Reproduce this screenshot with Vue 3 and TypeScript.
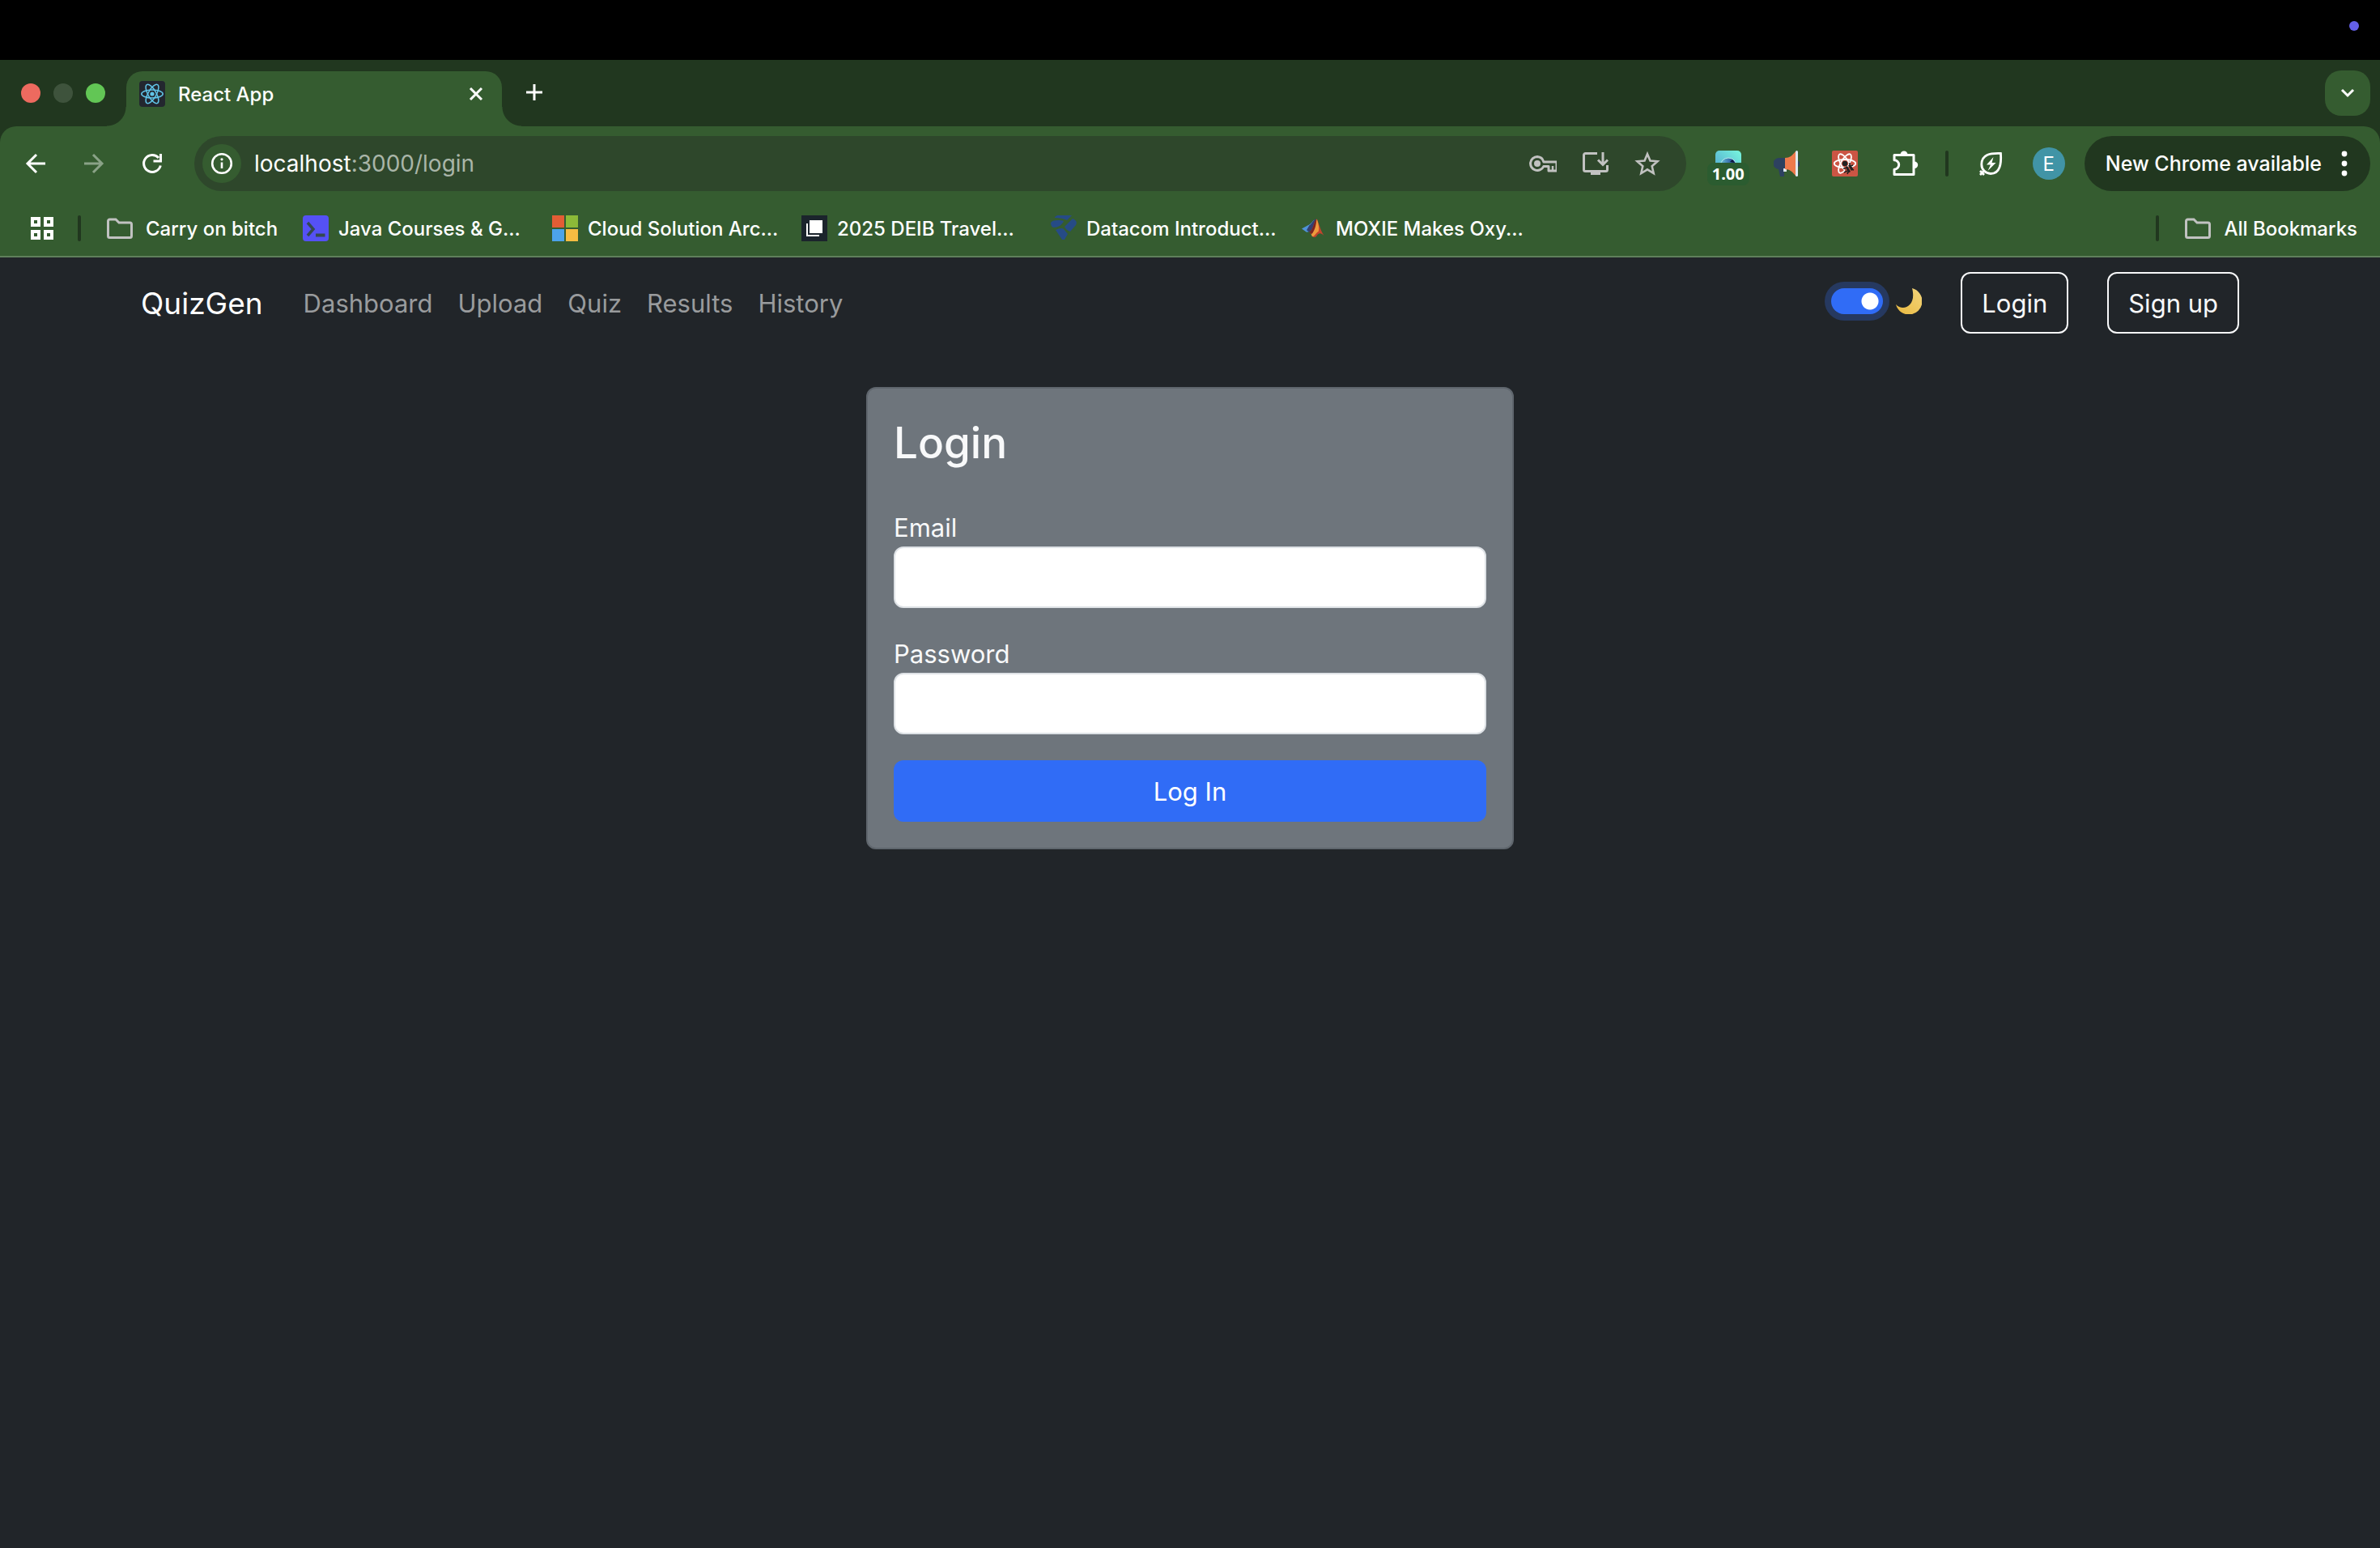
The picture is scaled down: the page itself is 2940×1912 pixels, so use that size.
<script setup lang="ts">
import { ref } from 'vue'

interface NavLink { label: string; href: string }
interface Bookmark { label: string; icon: 'java' | 'microsoft' | 'deib' | 'datacom' | 'matlab' }

const navLinks: NavLink[] = [
  { label: 'Dashboard', href: '#dashboard' },
  { label: 'Upload', href: '#upload' },
  { label: 'Quiz', href: '#quiz' },
  { label: 'Results', href: '#results' },
  { label: 'History', href: '#history' },
]

const bookmarks: Bookmark[] = [
  { label: 'Java Courses & G...', icon: 'java' },
  { label: 'Cloud Solution Arc...', icon: 'microsoft' },
  { label: '2025 DEIB Travel...', icon: 'deib' },
  { label: 'Datacom Introduct...', icon: 'datacom' },
  { label: 'MOXIE Makes Oxy...', icon: 'matlab' },
]

const darkMode = ref(true)
const email = ref('')
const password = ref('')
</script>

<template>
  <div class="screen">
    <div class="menubar"><span class="mic-dot"></span></div>

    <header class="browser">
      <div class="tabstrip">
        <div class="lights">
          <span class="light red"></span>
          <span class="light dim"></span>
          <span class="light green"></span>
        </div>
        <div class="tab">
          <svg class="i32" viewBox="0 0 32 32">
            <rect width="32" height="32" rx="4" fill="#23272f" />
            <g fill="none" stroke="#61c5e8" stroke-width="1.5">
              <ellipse cx="16" cy="16" rx="13.2" ry="5" />
              <ellipse cx="16" cy="16" rx="13.2" ry="5" transform="rotate(60 16 16)" />
              <ellipse cx="16" cy="16" rx="13.2" ry="5" transform="rotate(120 16 16)" />
            </g>
            <circle cx="16" cy="16" r="2.6" fill="#61c5e8" />
          </svg>
          <span class="tab-title">React App</span>
          <button class="plain" type="button" aria-label="Close tab">
            <svg class="i32" viewBox="0 0 32 32"><path d="M9 9l14 14M23 9L9 23" fill="none" stroke="#fff" stroke-width="3" /></svg>
          </button>
        </div>
        <button class="plain newtab" type="button" aria-label="New tab">
          <svg class="i32" viewBox="0 0 32 32"><path d="M16 5v20M6 15h20" fill="none" stroke="#fff" stroke-width="3" /></svg>
        </button>
        <button class="plain tabsearch" type="button" aria-label="Search tabs">
          <svg class="i32" viewBox="0 0 32 32"><path d="M9 12l7 7 7-7" fill="none" stroke="#fff" stroke-width="3" /></svg>
        </button>
      </div>

      <div class="toolbar">
        <div class="history">
          <button class="plain" type="button" aria-label="Back">
            <svg class="i32" viewBox="0 0 32 32"><path d="M28 16H6M17 5L6 16l11 11" fill="none" stroke="#fff" stroke-width="3" /></svg>
          </button>
          <button class="plain" type="button" aria-label="Forward">
            <svg class="i32" viewBox="0 0 32 32"><path d="M4 16h22M15 5l11 11-11 11" fill="none" stroke="#8aa287" stroke-width="3" /></svg>
          </button>
          <button class="plain" type="button" aria-label="Reload">
            <svg class="i32" viewBox="0 0 32 32">
              <path d="M26.300 18.500A10.500 10.500 0 1 1 24 9" fill="none" stroke="#fff" stroke-width="3" />
              <path d="M28 4v10.500H17.500v-3H25V4z" fill="#fff" />
            </svg>
          </button>
        </div>

        <div class="omnibox">
          <button class="plain info" type="button" aria-label="Site information">
            <svg class="i32" viewBox="0 0 32 32">
              <circle cx="16" cy="16" r="11.800" fill="none" stroke="#fff" stroke-width="2.600" />
              <path d="M16 14.500v7.500" stroke="#fff" stroke-width="2.600" />
              <circle cx="16" cy="10.800" r="1.600" fill="#fff" />
            </svg>
          </button>
          <div class="url"><span class="host">localhost</span>:3000/login</div>
          <div class="omni-icons">
            <svg class="i36" viewBox="0 0 36 36">
              <path d="M12 9.500a8.500 8.500 0 1 0 7.800 12H26v5.500h10V16H19.800A8.500 8.500 0 0 0 12 9.500z" fill="none" stroke="#c1c2c1" stroke-width="3" stroke-linejoin="round" />
              <circle cx="12" cy="18" r="4" fill="#c1c2c1" />
              <path d="M31 21v5" stroke="#c1c2c1" stroke-width="2.500" />
            </svg>
            <svg class="i32" viewBox="0 0 32 32">
              <path d="M18 3.500H3.500a2 2 0 0 0-2 2v18a2 2 0 0 0 2 2h25a2 2 0 0 0 2-2V18" fill="none" stroke="#c1c2c1" stroke-width="3" />
              <rect x="10" y="26" width="12" height="4" fill="#c1c2c1" />
              <path d="M25 2v15M19 11.500l6 6 6-6" fill="none" stroke="#c1c2c1" stroke-width="3" />
            </svg>
            <svg class="i32" viewBox="0 0 32 32">
              <path d="M16 4.200l3.500 8.300 9 .8-6.800 5.900 2 8.800-7.700-4.700L8.300 28l2-8.800-6.800-5.900 9-.8z" fill="none" stroke="#c1c2c1" stroke-width="2.600" />
            </svg>
          </div>
        </div>

        <div class="extensions">
          <div class="speed">
            <svg class="i32" viewBox="0 0 32 32">
              <defs>
                <linearGradient id="sky" x1="0" y1="1" x2="1" y2="0"><stop offset="0" stop-color="#4f9fcf" /><stop offset="1" stop-color="#78f7dd" /></linearGradient>
                <linearGradient id="lens" x1="0" y1="0" x2="1" y2="0"><stop offset="0" stop-color="#69c4dd" /><stop offset="1" stop-color="#142f86" /></linearGradient>
              </defs>
              <rect width="32" height="32" rx="5" fill="url(#sky)" />
              <circle cx="16" cy="19" r="10" fill="url(#lens)" stroke="#b7e9ea" stroke-width="1" />
              <path d="M18 14l3-3 3 4z" fill="#10183c" />
            </svg>
            <span class="speed-badge">1.00</span>
          </div>
          <svg class="i32" viewBox="0 0 32 32">
            <path d="M28 13h2a2 2 0 0 1 2 2v3a2 2 0 0 1-2 2h-2z" fill="#2d4160" />
            <path d="M15 9H7a7 7 0 0 0-1 14l2 9h5V23h2z" fill="#2d4160" />
            <rect x="12" y="22" width="4" height="4" fill="#dfe7ef" />
            <path d="M14 9c6 0 9-3 13-8v30c-4-5-7-8-13-8z" fill="#ee7a4c" />
            <rect x="27" y="0" width="3" height="32" rx="1.500" fill="#dfe9f0" />
          </svg>
          <svg class="i32" viewBox="0 0 32 32">
            <rect width="32" height="32" rx="2" fill="#cb5544" />
            <g fill="none" stroke="#fff" stroke-width="1.800">
              <ellipse cx="16" cy="16" rx="13.200" ry="5" />
              <ellipse cx="16" cy="16" rx="13.200" ry="5" transform="rotate(60 16 16)" />
              <ellipse cx="16" cy="16" rx="13.200" ry="5" transform="rotate(120 16 16)" />
            </g>
            <path d="M15 20h10l1 9h-9z" fill="#cb5544" />
            <circle cx="16" cy="16" r="3.200" fill="#222" />
            <path d="M16.500 20.500l2.500-1.500 4 7-2.500 1.500zM20 18.500l2.500-1.500 4 6-2.500 2z" fill="#222" />
            <path d="M14 22h3M15 27l4-2M19 29l1-3M22 15v3M26 18l-3 1M27 24l-3-1" stroke="#222" stroke-width="1.600" />
          </svg>
          <svg class="puzzle i36" viewBox="0 0 36 36">
            <path d="M5 9.500h24v24H5v-6.300a5.500 5.500 0 0 0 0-11.400z" transform="translate(0 -2)" fill="none" stroke="#fff" stroke-width="3" stroke-linejoin="round" />
            <path d="M12.500 7a4.500 4.500 0 0 1 9 0zM30 15.500a4.200 4.200 0 0 1 0 8.400z" fill="#fff" />
          </svg>
        </div>
        <span class="divider"></span>
        <svg class="leaf i32" viewBox="0 0 32 32">
          <path d="M28.500 3.500c.8 12-.5 25-12.500 25A11.300 11.300 0 0 1 4.800 17C5 5 15 3 28.500 3.500zM8.500 24.500L3 30M3 25l5 5" fill="none" stroke="#fff" stroke-width="2.800" />
          <path d="M19.500 8L11 17.500h5L12.500 25 22.500 15h-5z" fill="#fff" />
        </svg>
        <button class="plain avatar" type="button">E</button>
        <button class="plain update" type="button">
          <span>New Chrome available</span>
          <svg class="dots" viewBox="0 0 8 32"><g fill="#fff"><circle cx="4" cy="4" r="3.400" /><circle cx="4" cy="16" r="3.400" /><circle cx="4" cy="28" r="3.400" /></g></svg>
        </button>
      </div>

      <nav class="bookmarks">
        <svg class="i32" viewBox="0 0 32 32">
          <g fill="none" stroke="#fff" stroke-width="4"><rect x="4" y="4" width="8" height="8" /><rect x="20" y="4" width="8" height="8" /><rect x="4" y="20" width="8" height="8" /><rect x="20" y="20" width="8" height="8" /></g>
        </svg>
        <span class="divider first"></span>
        <a class="bookmark folder" href="#folder">
          <svg class="i32" viewBox="0 0 32 32"><path d="M1.500 25V7a2 2 0 0 1 2-2h7.500l4 4h13.500a2 2 0 0 1 2 2v14.500a2 2 0 0 1-2 2h-25a2 2 0 0 1-2-2z" fill="none" stroke="#c1c2c1" stroke-width="3" /></svg>
          <span>Carry on bitch</span>
        </a>
        <a v-for="b in bookmarks" :key="b.label" class="bookmark" href="#bookmark">
          <svg v-if="b.icon === 'java'" class="i32" viewBox="0 0 32 32">
            <rect width="32" height="32" rx="4" fill="#5551f5" />
            <path d="M6 9l7 8-7 8" fill="none" stroke="#34494f" stroke-width="3.500" />
            <path d="M16 24.500h11.500" stroke="#34494f" stroke-width="4" />
          </svg>
          <svg v-else-if="b.icon === 'microsoft'" class="i32" viewBox="0 0 32 32">
            <rect width="15" height="15" fill="#e35d35" /><rect x="17" width="15" height="15" fill="#8cba38" />
            <rect y="17" width="15" height="15" fill="#4ca3ea" /><rect x="17" y="17" width="15" height="15" fill="#f6bc42" />
          </svg>
          <svg v-else-if="b.icon === 'deib'" class="i32" viewBox="0 0 32 32">
            <rect width="32" height="32" fill="#1b242c" /><rect x="10" y="6" width="16" height="16" fill="#fff" />
            <path d="M7 10v15h15" fill="none" stroke="#fff" stroke-width="2" />
          </svg>
          <svg v-else-if="b.icon === 'datacom'" class="i32" viewBox="0 0 32 32">
            <g fill="#264b86">
              <path d="M5 2L8 0h18l-6 6C16 4 11 3 5 3z" />
              <path d="M0 9C3 5 12 6 16 7c-2 5-7 8-13 8-2-1-3-3-3-6z" />
              <path d="M17 14L27 4c4 2 6 4 4 8l-7 8c-3-1-6-3-7-6z" />
              <path d="M6 18c4-2 8-3 10-1l5 6-4 7h-3z" />
            </g>
          </svg>
          <svg v-else class="i32" viewBox="0 0 32 32">
            <g transform="translate(2 1) scale(.86)">
              <path d="M0 18l9-5c4-1 6-5 9-8l-7 17-4 1z" fill="#4f93d8" />
              <path d="M11 13c3-1 6-9 10-9l-6 15-4 4-4-3z" fill="#33406f" />
              <path d="M21 4c3 2 5 15 11 24-5-5-8-4-11 1-2 2-5 1-6 0-1-3-2-5-4-6 5-3 6-13 10-19z" fill="#c4432d" />
              <path d="M22 4c1 5 4 12 2 18-3 1-6 8-9 7-1-2-2-5-3-6 6-2 8-12 10-19z" fill="#ee9a3d" />
              <path d="M21 4c0 8-2 17-7 22l-3-3c5-3 6-13 10-19z" fill="#7b2420" />
            </g>
          </svg>
          <span>{{ b.label }}</span>
        </a>
        <span class="divider last"></span>
        <a class="bookmark all" href="#all">
          <svg class="i32" viewBox="0 0 32 32"><path d="M1.500 25V7a2 2 0 0 1 2-2h7.500l4 4h13.500a2 2 0 0 1 2 2v14.500a2 2 0 0 1-2 2h-25a2 2 0 0 1-2-2z" fill="none" stroke="#c1c2c1" stroke-width="3" /></svg>
          <span>All Bookmarks</span>
        </a>
      </nav>
    </header>

    <nav class="navbar">
      <a class="brand" href="#home">QuizGen</a>
      <div class="navlinks">
        <a v-for="l in navLinks" :key="l.label" :href="l.href">{{ l.label }}</a>
      </div>
      <div class="theme">
        <input id="theme" v-model="darkMode" class="switch" type="checkbox" role="switch" />
        <label for="theme" aria-label="Dark mode">
          <svg class="i32 moon" viewBox="0 0 32 32">
            <defs><linearGradient id="moon" x1="0" y1="1" x2="1" y2="0"><stop offset="0" stop-color="#e9b93f" /><stop offset="1" stop-color="#f3d57c" /></linearGradient></defs>
            <path d="M20 0A16.500 16.500 0 1 1 0 20c8 9 26 3 20-20z" fill="url(#moon)" />
          </svg>
        </label>
      </div>
      <button class="outline" type="button">Login</button>
      <button class="outline" type="button">Sign up</button>
    </nav>

    <main>
      <form class="card" @submit.prevent>
        <h3>Login</h3>
        <div class="field">
          <label for="email">Email</label>
          <input id="email" v-model="email" type="email" />
        </div>
        <div class="field">
          <label for="password">Password</label>
          <input id="password" v-model="password" type="password" />
        </div>
        <button class="submit" type="submit">Log In</button>
      </form>
    </main>
  </div>
</template>

<style>
body {
  background: #212529;
}
</style>

<style scoped>
* {
  box-sizing: border-box;
}
.screen {
  min-height: 100vh;
  background: #212529;
  font-family: Inter, "Liberation Sans", sans-serif;
  color: #fff;
}
svg {
  display: block;
  flex: none;
}
a {
  color: inherit;
  text-decoration: none;
}
button,
input {
  font-family: inherit;
}
.i32 {
  width: 32px;
  height: 32px;
}
.i36 {
  width: 36px;
  height: 36px;
}
.plain {
  display: flex;
  align-items: center;
  justify-content: center;
  padding: 0;
  border: 0;
  background: none;
  color: #fff;
}
.menubar {
  display: flex;
  justify-content: flex-end;
  padding: 26px 26px 36px;
  height: 74px;
  background: #000;
}
.mic-dot {
  width: 12px;
  height: 12px;
  border-radius: 50%;
  background: #6460e8;
}

.browser {
  background: #21371f;
  font-size: 24px;
  font-weight: 500;
}
.tabstrip {
  display: flex;
  align-items: center;
  height: 82px;
  padding: 0 12px 0 26px;
}
.lights {
  display: flex;
  gap: 16px;
  margin-right: 26px;
}
.light {
  width: 24px;
  height: 24px;
  border-radius: 50%;
}
.red {
  background: #ed6a5f;
}
.dim {
  background: #3e533c;
}
.green {
  background: #62c655;
}
.tab {
  position: relative;
  display: flex;
  align-items: center;
  align-self: flex-end;
  width: 464px;
  height: 68px;
  padding: 0 16px 12px;
  border-radius: 20px 20px 0 0;
  background: #355c30;
}
.tab::before,
.tab::after {
  content: "";
  position: absolute;
  bottom: 0;
  width: 24px;
  height: 24px;
}
.tab::before {
  right: 100%;
  background: radial-gradient(circle at 0 0, transparent 23px, #355c30 24px);
}
.tab::after {
  left: 100%;
  background: radial-gradient(circle at 100% 0, transparent 23px, #355c30 24px);
}
.tab-title {
  flex: 1;
  margin-left: 16px;
}
.newtab {
  margin-left: 24px;
}
.tabsearch {
  width: 56px;
  height: 56px;
  margin-left: auto;
  border-radius: 20px;
  background: #355c30;
}

.toolbar {
  display: flex;
  align-items: center;
  padding: 12px 12px 0 28px;
  border-radius: 20px 20px 0 0;
  background: #355c30;
}
.history {
  display: flex;
  gap: 40px;
  margin-right: 36px;
}
.omnibox {
  display: flex;
  flex: 1;
  align-items: center;
  height: 68px;
  padding: 0 32px 0 10px;
  border-radius: 34px;
  background: #2e472b;
}
.info {
  width: 48px;
  height: 48px;
  border-radius: 50%;
  background: #355c30;
}
.url {
  flex: 1;
  margin-left: 16px;
  font-size: 28px;
  font-weight: 400;
  color: #a9b5a8;
}
.host {
  color: #fff;
}
.omni-icons {
  display: flex;
  align-items: center;
  gap: 32px;
}
.extensions {
  display: flex;
  align-items: center;
  gap: 40px;
  margin-left: 36px;
}
.speed {
  position: relative;
}
.speed-badge {
  position: absolute;
  top: 15px;
  left: -10px;
  width: 52px;
  border-radius: 8px;
  background: #2b5c30;
  font: 700 20px/28px "Noto Sans", sans-serif;
  text-align: center;
}
.puzzle {
  margin-right: 32px;
}
.divider {
  width: 4px;
  height: 32px;
  border-radius: 2px;
  background: #21371f;
}
.leaf {
  margin-left: 36px;
}
.avatar {
  width: 40px;
  height: 40px;
  margin: 0 24px 0 36px;
  border-radius: 50%;
  background: #4194a6;
  font-size: 24px;
}
.update {
  gap: 24px;
  height: 68px;
  padding: 0 28px 0 26px;
  border-radius: 34px;
  background: #21371f;
  font-size: 25px;
  font-weight: 500;
}
.dots {
  width: 8px;
  height: 32px;
}

.bookmarks {
  display: flex;
  align-items: center;
  height: 82px;
  padding: 12px 28px 0 36px;
  background: #355c30;
  border-bottom: 2px solid #5f805b;
  font-weight: 450;
  white-space: nowrap;
}
.bookmark {
  display: flex;
  align-items: center;
  gap: 12px;
  width: 308px;
}
.folder {
  gap: 16px;
  width: 242px;
}
.first {
  margin: 0 32px 0 28px;
}
.last {
  margin: 0 32px 0 auto;
}
.all {
  gap: 16px;
  width: auto;
}

.navbar {
  display: flex;
  align-items: center;
  max-width: 2640px;
  height: 112px;
  margin: 0 auto;
  padding: 0 24px;
  font-size: 31px;
}
.brand {
  margin-right: 50px;
  font-size: 37px;
}
.navlinks {
  display: flex;
  flex: 1;
  gap: 31px;
  color: #999b9d;
}
.theme {
  display: flex;
  align-items: center;
  gap: 16px;
  margin-bottom: 4px;
}
.switch {
  appearance: none;
  width: 64px;
  height: 32px;
  margin: 0;
  border-radius: 16px;
  background: #306cf6 radial-gradient(circle at 48px 16px, #fff 10px, transparent 11px);
  box-shadow: 0 0 0 8px #263960;
}
.outline {
  height: 76px;
  margin-left: 48px;
  padding: 0 24px;
  border: 2px solid #f8f9fa;
  border-radius: 12px;
  background: none;
  color: #f8f9fa;
  font-size: 31px;
}

main {
  display: flex;
  justify-content: center;
  padding: 48px 24px;
}
.card {
  width: 800px;
  padding: 32px;
  border: 2px solid #5f666d;
  border-radius: 12px;
  background: #6e757c;
  color: #f8f9fa;
  font-size: 31px;
}
h3 {
  margin: 0 0 48px;
  padding-top: 3px;
  font-size: 53px;
  font-weight: 500;
  line-height: 64px;
}
.field {
  margin-bottom: 32px;
}
.field label {
  display: block;
  padding-top: 2px;
  line-height: 46px;
}
.field input {
  display: block;
  width: 100%;
  height: 76px;
  padding: 12px 24px;
  border: 2px solid #dee2e6;
  border-radius: 12px;
  background: #fff;
  font-size: 31px;
}
.submit {
  width: 100%;
  height: 76px;
  border: 0;
  border-radius: 12px;
  background: #306cf6;
  color: #fff;
  font-size: 31px;
}
</style>
